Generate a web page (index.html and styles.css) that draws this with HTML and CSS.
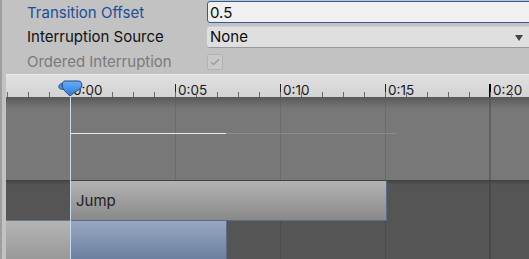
FILE: index.html
```html
<!DOCTYPE html>
<html lang="en">
<head>
  <meta charset="UTF-8" />
  <title>Transition Settings</title>
  <link rel="stylesheet" href="styles.css">
</head>
<body>
  <div class="window">
    <div class="inspector">
      <div class="row first">
        <label class="label focused">Transition Offset</label>
        <div class="field text-field">0.5</div>
      </div>
      <div class="row">
        <label class="label">Interruption Source</label>
        <div class="field popup">None<span class="arrow"></span></div>
      </div>
      <div class="row">
        <label class="label disabled">Ordered Interruption</label>
        <div class="checkbox">
          <svg width="10" height="8" viewBox="0 0 10 8"><path d="M1 4.2 L3.6 6.6 L9 1.2" fill="none" stroke="#9c9c9c" stroke-width="1.4"/></svg>
        </div>
      </div>
    </div>

    <div class="timeline">
      <div class="ruler">
        <span class="mark" style="left:64px">0:00</span>
        <span class="mark" style="left:169px">0:05</span>
        <span class="mark" style="left:274px">0:10</span>
        <span class="mark" style="left:379px">0:15</span>
        <span class="mark end" style="left:484px">0:20</span>
      </div>
      <div class="track">
        <div class="curve"></div>
      </div>
      <div class="lane jump-lane">
        <div class="gap"></div>
        <div class="clip">Jump</div>
        <div class="empty"></div>
      </div>
      <div class="lane next-lane">
        <div class="gap"></div>
        <div class="clip blue"></div>
        <div class="empty"></div>
      </div>

      <div class="playhead">
        <svg width="26" height="17" viewBox="0 0 26 17">
          <defs>
            <linearGradient id="ph" x1="0" y1="0" x2="0" y2="1">
              <stop offset="0" stop-color="#6aaef5"/>
              <stop offset="1" stop-color="#2a78db"/>
            </linearGradient>
          </defs>
          <path d="M6 3.5 C3 3.2 0.8 4.6 0.8 6.6 C0.8 8.8 3 9.8 6.5 9.2 Z" fill="#4f92e2" stroke="#22497e" stroke-width="1"/>
          <path d="M7 1 H20 C23 1 24.2 3 23.8 6 C23.3 9.5 16.5 11.5 12 16.2 C7.5 11.5 4.7 9.5 4.2 6 C3.8 3 5 1 7 1 Z" fill="url(#ph)" stroke="#22497e" stroke-width="1"/>
        </svg>
        <div class="line"></div>
      </div>
    </div>
  </div>
</body>
</html>
```

FILE: styles.css
```css
* {
  box-sizing: border-box;
}
body {
  margin: 0;
  font-family: 'Inter', 'Noto Sans', sans-serif;
  font-size: 15px;
  background: #c2c2c2;
  overflow: hidden;
}
.window {
  width: 529px;
  height: 259px;
  border-left: 2px solid #9e9e9e;
  overflow: hidden;
}

/* inspector rows */
.inspector {
  padding-left: 25px;
  display: flex;
  flex-direction: column;
}
.row {
  display: grid;
  grid-template-columns: 180px 1fr;
  align-items: center;
  height: 25px;
}
.row.first {
  height: 24px;
}
.label {
  color: #111;
}
.label.focused {
  color: #1c4f94;
}
.label.disabled {
  color: #7a7a7a;
}
.field {
  height: 22px;
  margin-right: -8px;
  padding-left: 3px;
  display: flex;
  align-items: center;
  color: #0a0a0a;
}
.text-field {
  background: #f0f0f0;
  border: 1px solid #2b5c9c;
  border-radius: 3px;
  padding-left: 2px;
}
.popup {
  background: #dfdfdf;
  border-bottom: 1px solid #999;
  border-top: 1px solid #cfcfcf;
  border-radius: 3px 0 0 3px;
  position: relative;
}
.arrow {
  position: absolute;
  right: 14px;
  top: 8px;
  border-left: 4px solid transparent;
  border-right: 4px solid transparent;
  border-top: 6px solid #444;
}
.checkbox {
  width: 16px;
  height: 16px;
  margin-top: 1px;
  background: #c9c9c9;
  border: 1px solid #b3b3b3;
  border-radius: 2px;
  display: flex;
  align-items: center;
  justify-content: center;
}

/* timeline */
.timeline {
  margin-left: 4px;
  position: relative;
}
.ruler {
  height: 23px;
  position: relative;
  border-top: 1px solid #ebebeb;
  background: linear-gradient(#e0e0e0, #d3d3d3);
}
.ruler::after {
  content: '';
  position: absolute;
  left: 0;
  right: 0;
  bottom: 0;
  height: 5px;
  background: repeating-linear-gradient(to right, #6a6a6a 0 1px, transparent 1px 21px);
  background-position: 1px 0;
}
.mark {
  position: absolute;
  top: 9px;
  bottom: 0;
  padding-left: 2px;
  border-left: 1px solid #222;
  font-size: 13.5px;
  line-height: 12px;
  color: #1a1a1a;
}
.mark.end {
  border-left: 2px solid #000;
  margin-left: -1px;
}
.track {
  height: 83px;
  padding-top: 36px;
  background:
    linear-gradient(#595959, rgba(120, 120, 120, 0) 12px),
    linear-gradient(to right, transparent 483px, #5f5f5f 483px 485px, transparent 485px),
    repeating-linear-gradient(to right, #6a6a6a 0 1px, transparent 1px 105px) 64px 0,
    #787878;
}
.curve {
  margin-left: 64px;
  width: 326px;
  height: 1px;
  background: linear-gradient(to right, #e8e8e8 0 156px, #8c8c8c 156px);
}
.lane {
  display: flex;
}
.lane .empty {
  flex: 1;
}
.jump-lane {
  height: 41px;
  border-top: 1px solid #414141;
}
.jump-lane .gap {
  width: 64px;
  background: linear-gradient(#474747, #555 4px);
  border-bottom: 1px solid #6a7790;
}
.jump-lane .empty {
  background:
    linear-gradient(#474747, rgba(85, 85, 85, 0) 4px),
    linear-gradient(to right, transparent 102px, #484848 102px 104px, transparent 104px),
    #555;
}
.clip {
  width: 317px;
  padding-left: 6px;
  display: flex;
  align-items: center;
  color: #222;
  background: linear-gradient(#b3b3b3, #898989);
  border-right: 1px solid #5b6b88;
  border-bottom: 1px solid #5b6b88;
}
.next-lane {
  height: 38px;
}
.next-lane .gap {
  width: 64px;
  background: linear-gradient(#b4b4b4, #999);
}
.clip.blue {
  width: 157px;
  border-bottom: none;
  background: linear-gradient(#98a8c2, #6b7f9f);
}
.next-lane .empty {
  background:
    linear-gradient(to right, transparent 53px, #4b4b4b 53px 54px, transparent 54px 158px, #4b4b4b 158px 159px, transparent 159px 262px, #484848 262px 264px, transparent 264px),
    #555;
}
.playhead {
  position: absolute;
  left: 52px;
  top: 6px;
  bottom: 0;
  width: 26px;
}
.playhead svg {
  display: block;
}
.playhead .line {
  position: absolute;
  left: 12px;
  top: 16px;
  bottom: 0;
  width: 1px;
  background: #cbd9ee;
}
```
